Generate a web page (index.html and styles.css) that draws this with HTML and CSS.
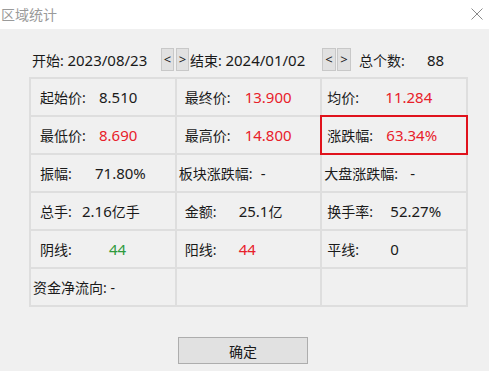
FILE: index.html
```html
<!DOCTYPE html>
<html>
<head>
<meta charset="UTF-8" />
<title>区域统计</title>
    <link rel="stylesheet" href="styles.css">
</head>
    <body>
    <div class="titlebar">
        <span class="title">区域统计</span>
        <span class="close">
            <svg width="12" height="12" viewBox="0 0 12 12"><path d="M0.5 0.5 L11.5 11.5 M11.5 0.5 L0.5 11.5" stroke="#8a8a8a" stroke-width="1" fill="none"/></svg>
        </span>
    </div>
    <div class="panel">
        <div class="range">
            <span class="date d1">开始: <span class="num">2023/08/23</span></span>
            <button class="nav">&lt;</button>
            <button class="nav last">&gt;</button>
            <span class="date d2">结束: <span class="num">2024/01/02</span></span>
            <button class="nav wide">&lt;</button>
            <button class="nav wide">&gt;</button>
            <span class="count-lbl">总个数:</span>
            <span class="num">88</span>
        </div>

        <table class="stats">
            <tr>
                <td><span class="lbl w59">起始价:</span><span class="num">8.510</span></td>
                <td class="c2"><span class="lbl w60">最终价:</span><span class="num up">13.900</span></td>
                <td class="c3"><span class="lbl w58">均价:</span><span class="num up">11.284</span></td>
            </tr>
            <tr>
                <td><span class="lbl w59">最低价:</span><span class="num up">8.690</span></td>
                <td class="c2"><span class="lbl w60">最高价:</span><span class="num up">14.800</span></td>
                <td class="c3 mark"><span class="lbl w59">涨跌幅:</span><span class="num up">63.34%</span></td>
            </tr>
            <tr>
                <td><span class="lbl w55">振幅:</span><span class="num">71.80%</span></td>
                <td class="tight"><span class="lbl w82">板块涨跌幅:</span><span class="num">-</span></td>
                <td class="c3 tight"><span class="lbl w86">大盘涨跌幅:</span><span class="num">-</span></td>
            </tr>
            <tr>
                <td><span class="lbl w42">总手:</span><span class="num">2.16</span>亿手</td>
                <td class="c2"><span class="lbl w54">金额:</span><span class="num">25.1</span>亿</td>
                <td class="c3"><span class="lbl w63">换手率:</span><span class="num">52.27%</span></td>
            </tr>
            <tr>
                <td><span class="lbl w69">阴线:</span><span class="num down">44</span></td>
                <td class="c2"><span class="lbl w54">阳线:</span><span class="num up">44</span></td>
                <td class="c3"><span class="lbl w63">平线:</span><span class="num">0</span></td>
            </tr>
            <tr>
                <td class="tight"><span class="lbl">资金净流向: -</span></td>
                <td></td>
                <td></td>
            </tr>
        </table>

        <div class="actions">
            <button class="ok">确定</button>
        </div>
    </div>
    </body>
</html>
```

FILE: styles.css
```css
html, body {
  margin: 0;
  height: 100%;
  font-family: "Noto Sans", "Noto Sans CJK SC", sans-serif;
  font-size: 14px;
  color: #1a1a1a;
}
body {
  display: flex;
  flex-direction: column;
  background: #fff;
}
.num {
  font-size: 15px;
}

.titlebar {
  height: 29px;
  display: flex;
  align-items: center;
  justify-content: space-between;
  padding: 0 6px 0 1px;
  background: #fff;
}
.titlebar .title {
  color: #9a9a9a;
  font-size: 14px;
  margin-top: -2px;
}
.titlebar .close {
  display: flex;
  margin-top: -2px;
}

.panel {
  flex: 1;
  background: #f0f0f0;
  padding: 19px 20px 0 29px;
}

.range {
  display: flex;
  align-items: center;
  height: 23px;
  padding-left: 3px;
}
.range .date {
  white-space: nowrap;
}
.range .d1 {
  width: 129px;
}
.range .d2 {
  width: 132px;
}
.nav {
  width: 13px;
  height: 23px;
  padding: 0;
  margin: 0 2px 0 0;
  border: 1px solid #c8c8c8;
  background: #e1e1e1;
  font-family: inherit;
  font-size: 13px;
  color: #1a1a1a;
  line-height: 1;
}
.nav.last {
  margin-right: 1px;
}
.nav.wide {
  width: 14px;
  margin-right: 1px;
}
.count-lbl {
  margin-left: 7px;
  width: 68px;
}

.stats {
  margin-top: 6px;
  width: 439px;
  border-collapse: collapse;
  table-layout: fixed;
}
.stats td {
  border: 2px solid #dedede;
  height: 36px;
  padding: 0 0 0 9px;
  white-space: nowrap;
}
.stats td.c2 {
  padding-left: 8px;
}
.stats td.c3 {
  padding-left: 5px;
}
.stats td.tight {
  padding-left: 2px;
}
.stats td.mark {
  outline: 2px solid #e0121c;
  outline-offset: -1px;
}
.lbl {
  display: inline-block;
}
.w42 { width: 42px; }
.w54 { width: 54px; }
.w55 { width: 55px; }
.w58 { width: 58px; }
.w59 { width: 59px; }
.w60 { width: 60px; }
.w63 { width: 63px; }
.w69 { width: 69px; }
.w82 { width: 82px; }
.w86 { width: 86px; }

.up {
  color: #e8202a;
}
.down {
  color: #2e9a3c;
}

.actions {
  display: flex;
  padding-left: 149px;
  margin-top: 30px;
}
.ok {
  width: 130px;
  height: 27px;
  border: 1px solid #adadad;
  background: #e1e1e1;
  font-family: inherit;
  font-size: 14px;
  color: #1a1a1a;
  padding: 0;
}
```
